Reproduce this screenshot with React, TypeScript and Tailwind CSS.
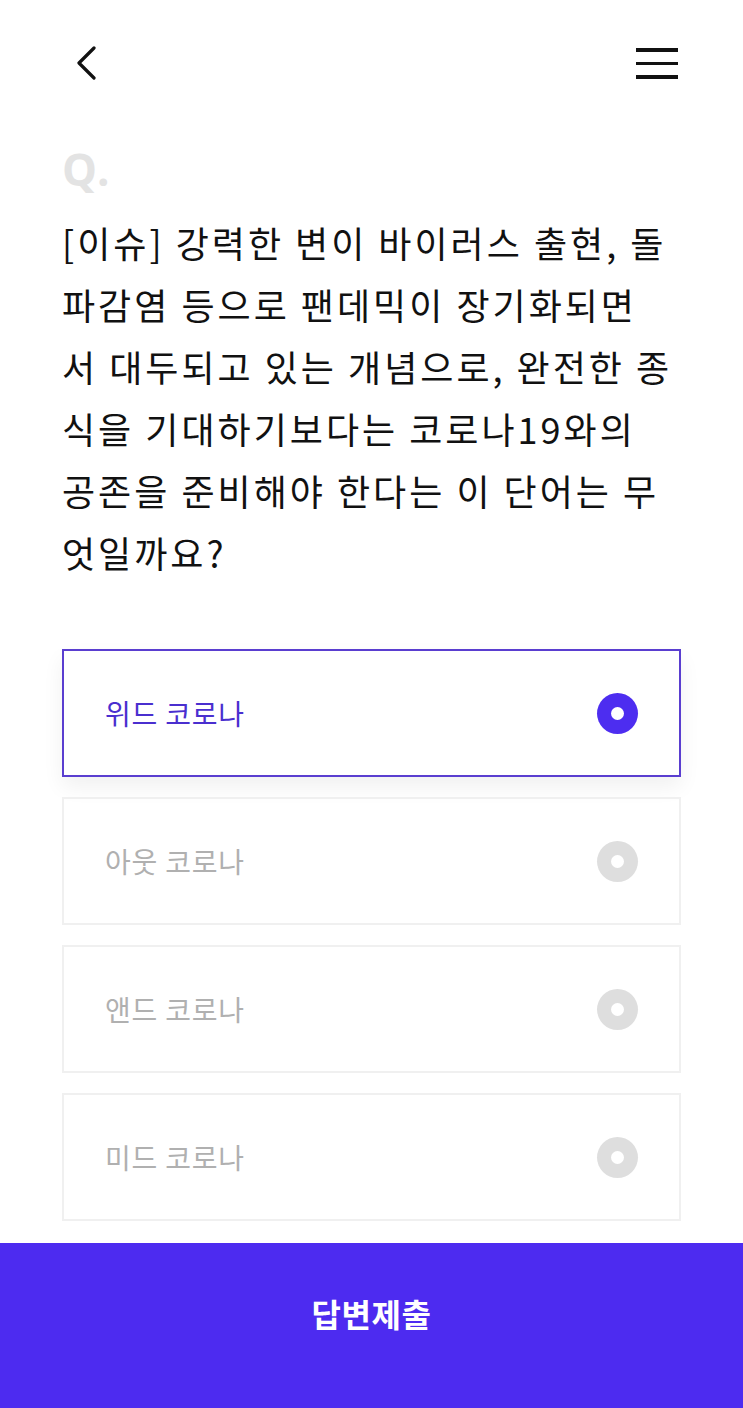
import React from "react";

const lines = [
  "[이슈] 강력한 변이 바이러스 출현, 돌",
  "파감염 등으로 팬데믹이 장기화되면",
  "서 대두되고 있는 개념으로, 완전한 종",
  "식을 기대하기보다는 코로나19와의",
  "공존을 준비해야 한다는 이 단어는 무",
  "엇일까요?",
];

const options = ["위드 코로나", "아웃 코로나", "앤드 코로나", "미드 코로나"];

function Radio({ on }: { on: boolean }) {
  return (
    <div
      className={`w-[41px] h-[41px] rounded-full flex items-center justify-center ${
        on ? "bg-[#4d2df0]" : "bg-[#dedede]"
      }`}
    >
      <div className="w-[13px] h-[13px] rounded-full bg-white" />
    </div>
  );
}

export default function App() {
  return (
    <div
      className="w-[743px] h-[1408px] bg-white flex flex-col overflow-hidden"
      style={{ fontFamily: '"Noto Sans CJK KR", "Noto Sans", sans-serif' }}
    >
      <div className="h-[125px] flex items-start justify-between pl-[74px] pr-[65px] pt-[46px]">
        <svg width="26" height="34" viewBox="0 0 26 34" fill="none">
          <path d="M20 2 L5 17 L20 32" stroke="#111" strokeWidth="3.2" strokeLinecap="round" strokeLinejoin="round" />
        </svg>
        <div className="flex flex-col gap-[10px] pt-[2px] w-[42px]">
          <div className="h-[3.5px] bg-[#111]" />
          <div className="h-[3.5px] bg-[#111]" />
          <div className="h-[3.5px] bg-[#111]" />
        </div>
      </div>
      <div className="px-[62px]">
        <div className="text-[44px] font-bold text-[#e3e3e3] leading-none h-[92px] pt-[22px]" style={{ fontFamily: '"Open Sans", sans-serif' }}>
          Q.
        </div>
        <div className="text-[36px] leading-[62px] text-[#111] tracking-[3px] mt-[-6px]">
          {lines.map((l) => (
            <div key={l} className="whitespace-nowrap">{l}</div>
          ))}
        </div>
      </div>
      <div className="px-[62px] mt-[66px] flex flex-col gap-[20px]">
        {options.map((o, i) => {
          const on = i === 0;
          return (
            <div
              key={o}
              className={`h-[128px] flex items-center justify-between pl-[41px] pr-[41px] ${
                on
                  ? "border-2 border-[#5a3ed0] shadow-[0_10px_20px_rgba(0,0,0,0.06)]"
                  : "border-2 border-[#f0f0f0]"
              }`}
            >
              <span className={`text-[28px] tracking-[0.8px] ${on ? "text-[#4a2fcf]" : "text-[#b0b0b0]"}`}>
                {o}
              </span>
              <Radio on={on} />
            </div>
          );
        })}
      </div>
      <div className="mt-auto h-[165px] bg-[#4d2bf0] flex items-center justify-center pb-[26px]">
        <span className="text-white text-[32px] font-bold tracking-[0.5px]">답변제출</span>
      </div>
    </div>
  );
}
